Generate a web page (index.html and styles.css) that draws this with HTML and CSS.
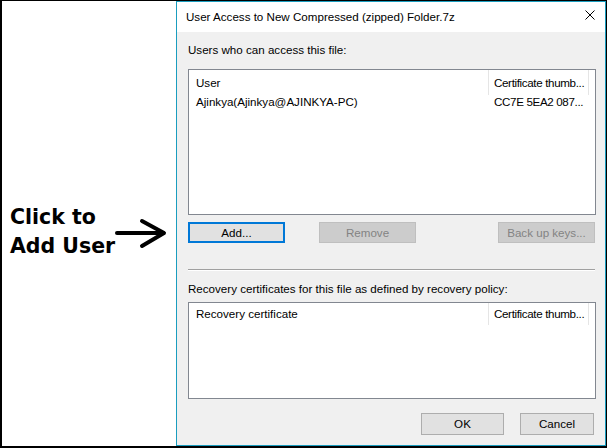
FILE: index.html
```html
<!DOCTYPE html>
<html>
<head>
<meta charset="utf-8">
<link rel="stylesheet" href="styles.css">
</head>
<body>
<div class="frame">
  <div class="note">
    <div class="note-text">
      <div>Click to</div>
      <div>Add User</div>
    </div>
    <svg class="arrow" width="54" height="34" viewBox="0 0 54 34">
      <line x1="3" y1="17" x2="49" y2="17" stroke="#000" stroke-width="4" stroke-linecap="round"/>
      <polyline points="28,5 50,17 28,30" fill="none" stroke="#000" stroke-width="4" stroke-linecap="round" stroke-linejoin="round"/>
    </svg>
  </div>
  <div class="dialog">
    <div class="titlebar">
      <span class="title">User Access to New Compressed (zipped) Folder.7z</span>
      <svg class="close" width="10" height="10" viewBox="0 0 10 10">
        <path d="M0.5 0.5 L9.5 9.5 M9.5 0.5 L0.5 9.5" stroke="#000" stroke-width="1" fill="none"/>
      </svg>
    </div>
    <div class="body">
      <div class="label label-first">Users who can access this file:</div>
      <div class="list list-users">
        <div class="list-head head-users">
          <div class="col col-name">User</div>
          <div class="col col-thumb">Certificate thumb...</div>
        </div>
        <div class="list-row">
          <div class="col col-name">Ajinkya(Ajinkya@AJINKYA-PC)</div>
          <div class="col col-thumb">CC7E 5EA2 087...</div>
        </div>
      </div>
      <div class="btn-row">
        <div class="btn btn-default btn-wide">Add...</div>
        <div class="btn btn-disabled btn-wide btn-remove">Remove</div>
        <div class="btn btn-disabled btn-wide btn-backup">Back up keys...</div>
      </div>
      <div class="sep"></div>
      <div class="label label-second">Recovery certificates for this file as defined by recovery policy:</div>
      <div class="list list-recovery">
        <div class="list-head head-recovery">
          <div class="col col-name">Recovery certificate</div>
          <div class="col col-thumb">Certificate thumb...</div>
        </div>
      </div>
      <div class="footer">
        <div class="btn btn-ok">OK</div>
        <div class="btn btn-cancel">Cancel</div>
      </div>
    </div>
  </div>
</div>
</body>
</html>
```

FILE: styles.css
```css
html, body {
  margin: 0;
  padding: 0;
  background: #fff;
}

.frame {
  width: 607px;
  height: 448px;
  box-sizing: border-box;
  border-top: 1px solid #000;
  border-left: 2px solid #000;
  border-right: 1px solid #000;
  border-bottom: 2px solid #000;
  display: flex;
  background: #fff;
}

.note {
  width: 174px;
  flex: none;
  display: flex;
  align-items: flex-start;
  padding-top: 202px;
  box-sizing: border-box;
}

.note-text {
  width: 104px;
  padding-left: 8px;
  flex: none;
  font-family: "DejaVu Sans", sans-serif;
  font-weight: 700;
  font-size: 20.5px;
  line-height: 29px;
  color: #000;
  white-space: nowrap;
}

.arrow {
  flex: none;
  margin-top: 13px;
  display: block;
}

.dialog {
  width: 430px;
  flex: none;
  box-sizing: border-box;
  border: 1px solid #1a9dbf;
  display: flex;
  flex-direction: column;
  background: #f0f0f0;
  font-family: "Liberation Sans", Arial, sans-serif;
  font-size: 11.6px;
  color: #000;
}

.titlebar {
  height: 30px;
  background: #fff;
  display: flex;
  justify-content: space-between;
  align-items: flex-start;
  padding: 0 10px 0 9px;
  flex: none;
}

.title {
  line-height: 30px;
  white-space: nowrap;
}

.close {
  margin-top: 8px;
  display: block;
}

.body {
  padding: 10px 9px 0 11px;
  display: flex;
  flex-direction: column;
}

.label {
  line-height: 15px;
  white-space: nowrap;
}

.label-second {
  margin-top: 10px;
}

.list {
  box-sizing: border-box;
  border: 1px solid #828790;
  background: #fff;
}

.list-users {
  margin-top: 12px;
  height: 146px;
}

.list-recovery {
  margin-top: 6px;
  height: 97px;
}

.list-head {
  display: flex;
}

.head-users {
  line-height: 25px;
}

.head-recovery {
  line-height: 22px;
}

.list-row {
  display: flex;
  line-height: 14px;
}

.col {
  box-sizing: border-box;
  white-space: nowrap;
  overflow: hidden;
}

.col-name {
  width: 300px;
  padding-left: 7px;
}

.col-thumb {
  width: 100px;
  padding-left: 5px;
  letter-spacing: -0.35px;
}

.list-head .col {
  border-right: 1px solid #e5e5e5;
}

.btn-row {
  display: flex;
  margin-top: 7px;
}

.btn {
  box-sizing: border-box;
  height: 21px;
  border: 1px solid #adadad;
  background: #e1e1e1;
  text-align: center;
  line-height: 19px;
  white-space: nowrap;
}

.btn-wide {
  width: 97px;
}

.btn-default {
  border: 2px solid #0078d7;
  line-height: 17px;
}

.btn-disabled {
  background: #cccccc;
  border-color: #bfbfbf;
  color: #838383;
}

.btn-remove {
  margin-left: 34px;
}

.btn-backup {
  margin-left: auto;
  margin-right: 1px;
}

.sep {
  margin-top: 26px;
  height: 0;
  border-top: 1px solid #a0a0a0;
  border-bottom: 1px solid #fff;
  margin-right: 1px;
}

.footer {
  display: flex;
  justify-content: flex-end;
  margin-top: 14px;
  padding-right: 2px;
}

.footer .btn {
  height: 22px;
  line-height: 20px;
}

.btn-ok {
  width: 83px;
}

.btn-cancel {
  width: 74px;
  margin-left: 16px;
}
```
